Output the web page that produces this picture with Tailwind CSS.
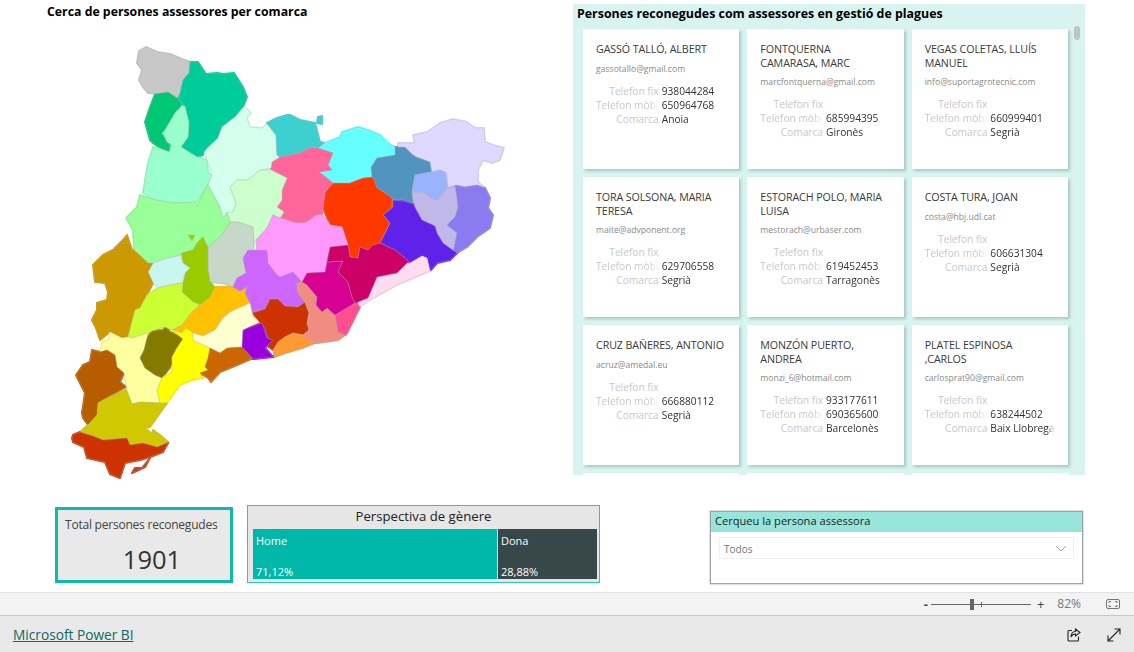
<!DOCTYPE html>
<html lang="en">
<head>
    <meta charset="UTF-8">
    <title>Microsoft Power BI</title>
    <script src="https://cdn.jsdelivr.net/npm/@tailwindcss/browser@4"></script>
</head>
<body class="h-[652px] w-[1134px] overflow-hidden bg-white font-['Open_Sans',sans-serif] flex flex-col">

    <!-- Report page -->
    <main class="h-[592px] flex flex-col">
        <div class="h-[505px] flex">
            <!-- Map -->
            <section class="w-[573px] pl-[47px] pt-[3px]">
                <h2 class="text-[12.3px] leading-[17px] font-bold text-black">Cerca de persones assessores per comarca</h2>
                <svg class="w-[480px] h-[450px] mt-[21px] ml-[23px]" viewBox="70 41 480 450" stroke-linejoin="round">
                    <g id="underlay" stroke-width="2"></g>
                    <g id="comarques" stroke="#b0b0b0" stroke-width="0.4">
                    <polygon fill="#c8c8c8" points="139,51 146,47 157,52 170,54 182,59 190,62 189,73 183,80 180,93 177,98 168,92 160,94 148,93 143,87 139,80 142,70 137,63"/>
                    <polygon fill="#00c774" points="155,94 168,92 177,98 182,104 175,113 168,127 162,133 166,142 170,145 169,152 160,148 153,143 150,140 145,122 149,110"/>
                    <polygon fill="#00cc99" points="190,62 198,62 206,74 217,73 223,74 234,73 243,87 247,97 243,107 235,117 222,127 218,138 207,148 203,155 197,157 181,147 188,137 189,123 185,107 179,98 183,80 189,73"/>
                    <polygon fill="#99ffcc" points="185,106 189,123 188,137 181,147 197,157 207,160 208,173 212,175 207,186 197,202 175,203 155,200 143,193 145,180 148,163 153,147 170,152 172,145 163,133 175,113"/>
                    <polygon fill="#d4ffec" points="245,107 251,113 247,118 250,127 262,128 267,124 276,135 277,155 280,157 271,168 260,170 248,180 237,180 230,187 236,203 233,212 223,218 220,207 208,185 212,175 207,160 204,152 218,138 222,127 235,117"/>
                    <polygon fill="#3dd0d0" points="267,123 277,118 287,115 290,115 300,120 315,123 320,142 325,143 318,148 309,148 300,153 280,157 277,155 276,135"/>
                    <polygon fill="#3dd0d0" points="318,117 322,116 322,124 317,123"/>
                    <polygon fill="#66ffff" points="318,148 325,143 340,137 342,132 358,127 368,130 380,135 388,143 395,147 397,155 377,158 371,167 373,177 363,178 350,183 340,183 333,183 327,178 319,172 332,170 328,165 333,153"/>
                    <polygon fill="#e0d9ff" points="398,143 415,143 413,135 427,132 440,123 453,119 467,122 475,128 484,128 485,142 493,145 504,148 500,160 492,163 483,160 478,170 478,182 485,188 477,185 465,187 457,185 448,187 447,173 440,170 432,172 430,162 417,157 410,153 398,147"/>
                    <polygon fill="#5294c0" points="395,147 405,147 415,157 430,162 431,172 415,175 412,192 413,203 403,200 393,200 385,193 377,188 372,178 371,168 377,158 395,155"/>
                    <polygon fill="#99b3ff" points="415,175 432,172 440,170 445,172 447,187 438,200 432,199 423,192 412,192"/>
                    <polygon fill="#c0b8e8" points="412,193 423,192 432,199 438,200 448,187 457,187 458,207 455,217 447,225 457,233 455,242 453,253 443,243 437,233 435,226 422,220 415,207"/>
                    <polygon fill="#8a7cf0" points="455,185 465,187 477,185 485,188 490,198 488,208 493,215 490,228 477,237 467,247 457,253 453,253 457,233 447,225 455,217 458,207"/>
                    <polygon fill="#5f22ea" points="393,200 403,201 413,204 422,220 435,226 437,233 443,243 457,253 450,260 437,263 430,271 427,258 422,256 410,263 405,258 395,250 380,243 390,223 383,215 393,207"/>
                    <polygon fill="#ffdcef" points="422,256 427,258 430,271 397,285 370,300 360,307 358,302 368,298 377,277 397,273 407,263 410,263"/>
                    <polygon fill="#ff3800" points="333,183 350,183 363,178 373,177 377,188 385,193 392,198 392,207 383,215 390,223 380,243 373,245 368,250 360,247 358,258 350,257 348,245 342,227 330,225 323,208 325,192"/>
                    <polygon fill="#ff6699" points="280,157 300,153 309,148 318,148 333,153 328,165 332,170 319,172 327,178 333,183 325,192 323,208 322,215 317,215 305,223 295,223 287,220 280,218 284,212 277,207 282,200 282,190 287,178 271,170 272,162"/>
                    <polygon fill="#ccffcc" points="230,187 237,180 248,180 260,170 271,170 287,178 282,190 282,200 277,207 284,212 280,218 273,215 267,228 256,240 257,250 253,250 254,243 253,227 238,222 230,222 227,212 233,212 236,203"/>
                    <polygon fill="#ff99ff" points="273,215 280,218 287,220 295,223 305,223 317,215 322,215 330,225 342,227 348,245 330,247 327,260 325,272 307,273 302,282 293,272 280,277 277,275 268,263 267,250 257,250 256,240 267,228"/>
                    <polygon fill="#c8d8c8" points="230,222 238,222 253,227 254,243 253,250 248,250 243,258 246,273 237,278 233,287 222,283 210,282 208,270 208,247 220,237"/>
                    <polygon fill="#99ff99" points="140,195 155,200 175,203 195,202 197,207 207,186 208,185 220,207 223,218 227,212 230,222 220,237 208,247 203,237 197,243 193,250 182,253 180,255 167,258 153,263 148,263 134,250 133,230 126,218 137,207"/>
                    <polygon fill="#99cc00" points="182,253 193,250 197,243 203,237 205,243 208,247 208,270 210,282 215,288 210,297 202,305 193,302 182,292 185,273 190,268 183,263"/>
                    <polygon fill="#99cc00" points="188,235 195,235 192,241"/>
                    <polygon fill="#c8f5ee" points="153,263 167,258 175,257 180,255 183,263 190,268 185,273 182,283 170,285 158,288 153,283 148,272"/>
                    <polygon fill="#cc9900" points="113,250 123,240 127,235 132,250 134,250 148,263 153,263 148,272 153,283 147,295 140,308 135,310 128,337 122,338 110,332 100,340 96,328 92,320 97,310 97,303 107,300 108,292 105,283 95,282 93,265 103,255"/>
                    <polygon fill="#ccff33" points="147,295 158,288 170,285 182,283 182,292 193,302 200,305 192,312 182,325 173,330 163,327 148,333 132,338 128,337 135,310 140,308"/>
                    <polygon fill="#ffc000" points="173,330 182,325 192,312 200,305 210,297 215,287 233,287 240,291 247,287 245,293 250,303 230,312 223,318 215,330 203,336 193,333 186,328 182,333"/>
                    <polygon fill="#cc66ff" points="243,258 248,250 253,250 257,250 267,250 268,263 277,275 280,277 293,272 302,282 297,283 298,293 305,302 298,307 285,306 278,299 270,299 265,309 252,313 250,303 245,293 247,287 240,291 233,287 237,278 246,273"/>
                    <polygon fill="#cc3300" points="252,313 265,309 270,299 278,299 285,306 298,307 305,302 309,313 307,323 309,330 303,335 293,333 285,337 278,342 273,350 266,345 272,340 268,339 265,328 260,323"/>
                    <polygon fill="#ff9933" points="274,350 278,342 285,337 293,333 303,335 309,340 317,342 302,348 285,353 274,357"/>
                    <polygon fill="#f08c80" points="297,283 302,282 307,285 317,297 316,305 322,312 327,308 335,315 338,332 345,335 338,340 317,343 309,340 303,335 309,330 307,323 309,313 305,302 298,293"/>
                    <polygon fill="#ff4f8f" points="335,315 355,303 360,307 347,333 345,335 338,332"/>
                    <polygon fill="#d60093" points="327,262 343,261 338,272 348,282 352,297 355,303 335,315 327,308 322,312 316,305 317,297 307,285 302,282 307,273 325,272"/>
                    <polygon fill="#cc0066" points="330,247 348,245 350,257 358,258 360,247 368,250 373,245 380,243 395,250 405,258 410,263 407,263 397,273 377,277 368,298 358,302 355,303 352,297 348,282 338,272 343,261 327,262"/>
                    <polygon fill="#ffffa0" points="100,352 102,342 108,340 110,332 122,338 128,337 132,338 148,333 147,338 144,350 140,358 145,368 155,375 162,378 157,390 160,403 140,402 132,404 127,390 124,373 117,367 115,355 107,350"/>
                    <polygon fill="#857a00" points="152,331 163,330 166,327 170,332 178,335 183,339 177,348 172,357 172,365 162,378 155,375 145,368 140,358 144,350 147,338"/>
                    <polygon fill="#ffff00" points="173,330 182,333 186,328 193,333 193,340 210,348 208,358 205,367 208,370 200,373 203,378 192,380 180,385 167,403 160,403 157,390 162,378 172,372 172,365 172,357 177,348 183,339 178,335"/>
                    <polygon fill="#ffffd0" points="193,333 203,336 215,330 223,318 230,312 250,303 253,317 259,322 243,330 242,347 227,348 220,353 210,348 193,340"/>
                    <polygon fill="#cc6600" points="210,348 220,353 227,348 242,347 253,358 237,365 220,372 211,382 208,378 200,373 208,370 205,367 208,358"/>
                    <polygon fill="#9900dd" points="243,330 262,323 267,338 273,340 265,348 273,357 253,359 242,347"/>
                    <polygon fill="#b85c00" points="92,350 100,352 107,350 115,355 117,367 124,373 120,382 126,387 103,400 98,403 97,415 88,425 83,418 82,413 85,393 80,383 76,375 83,365 90,362"/>
                    <polygon fill="#d0c800" points="126,390 132,404 140,402 160,403 167,403 150,427 145,428 152,434 153,430 160,435 168,442 157,447 143,443 130,445 127,438 103,440 93,436 80,432 88,425 97,415 98,403 103,400"/>
                    <polygon fill="#cc3300" points="80,432 93,436 103,440 127,438 130,445 143,443 157,447 168,443 163,452 150,457 140,460 125,463 120,478 110,474 105,462 87,458 84,447 73,442 72,438 73,435"/>
                    <polygon fill="#cc3300" points="150,458 145,467 132,473 135,468 142,468"/>
                    </g>
                </svg>
            </section>

            <!-- Advisers list -->
            <section class="relative mt-[4px] h-[471px] w-[512px] bg-[#d9f4f0] overflow-hidden">
                <h2 class="pl-[4px] pt-[1px] text-[12.4px] leading-[17px] font-bold text-black">Persones reconegudes com assessores en gestió de plagues</h2>
                <div class="absolute right-[5px] top-[22px] w-[6px] h-[14px] rounded-[3px] bg-[#bcc6c6]"></div>
                <div id="cards" class="mt-[7px] ml-[10px] w-[485px] grid grid-cols-3 gap-x-[8px] gap-y-[8px] auto-rows-[140px]"></div>
            </section>
        </div>

        <!-- Bottom row: KPI, treemap, slicer -->
        <div class="flex items-start">
            <div class="mt-[2px] ml-[55px] w-[178px] h-[76px] border-[3px] border-[#0fb9ac] bg-[#e9e9e9]">
                <p class="pt-[6px] pl-[7px] text-[12px] leading-[17px] text-[#444] tracking-[-0.22px] whitespace-nowrap">Total persones reconegudes</p>
                <p class="mt-[10px] pl-[16px] text-center text-[25.500px] leading-[32px] text-[#333]">1901</p>
            </div>

            <div class="ml-[14px] w-[353px] h-[78px] border border-[#2cc5b8] bg-[#e6e6e6] flex flex-col">
                <p class="h-[23px] text-center text-[13.2px] leading-[21px] text-[#222]">Perspectiva de gènere</p>
                <div class="ml-[5px] mr-[2px] h-[50px] flex gap-[1px] text-[11px] leading-[15px] text-white">
                    <div class="w-[244px] bg-[#00b8aa] flex flex-col justify-between px-[3px] pt-[4px]"><span>Home</span><span>71,12%</span></div>
                    <div class="flex-1 bg-[#37474a] flex flex-col justify-between px-[3px] pt-[4px]"><span>Dona</span><span>28,88%</span></div>
                </div>
            </div>

            <div class="mt-[6px] ml-[110px] w-[373px] h-[73px] border border-[#a0a0a0] shadow-[0_0_0_0.5px_#c0c0c0]">
                <p class="h-[20px] bg-[#98e5dc] pl-[4px] text-[11.1px] leading-[18px] text-[#222]">Cerqueu la persona assessora</p>
                <div class="mx-[8px] mt-[5px] h-[22px] border border-[#f0f0f0] flex items-center justify-between pl-[4px] pr-[6px] text-[10px] text-[#777]">
                    <span class="pt-[2px]">Todos</span>
                    <svg width="12" height="7" viewBox="0 0 12 7" fill="none" stroke="#888" stroke-width="0.8"><path d="M1 1l5 5 5-5"/></svg>
                </div>
            </div>
        </div>
    </main>

    <!-- Zoom bar -->
    <div class="h-[24px] bg-[#f3f3f3] border-t border-t-[#e2e2e2] border-b border-b-[#c8c8c8] flex items-center justify-end text-[#666]">
        <span class="text-[13px] font-bold leading-none text-[#444]">-</span>
        <div class="relative ml-[3px] w-[100px] h-[1px] bg-[#666]">
            <div class="absolute left-[39px] top-[-5px] w-[4px] h-[11px] bg-[#666]"></div>
            <div class="absolute left-[50px] top-[-2px] w-[1px] h-[5px] bg-[#666]"></div>
        </div>
        <span class="ml-[6px] text-[13px] leading-none text-[#444]">+</span>
        <span class="ml-[13px] text-[12px] leading-none text-[#777]">82%</span>
        <svg class="ml-[25px] mr-[14px]" width="14" height="10" viewBox="0 0 14 10" fill="none" stroke="#555" stroke-width="0.8">
            <rect x="0.5" y="0.5" width="13" height="9" rx="1.5"/>
            <path d="M3 4V2.5h2M9 2.5h2V4M11 6v1.5H9M5 7.5H3V6"/>
        </svg>
    </div>

    <!-- Footer -->
    <footer class="flex-1 bg-[#e9e9e9] flex items-center justify-between pl-[13px] pr-[13px] pt-[2px]">
        <a href="#" class="pt-[1px] text-[13.7px] text-[#0b6a66] underline">Microsoft Power BI</a>
        <div class="flex items-center gap-[26px]">
            <svg width="14" height="14" viewBox="0 0 14 14" fill="none" stroke="#222" stroke-width="1.1">
                <path d="M5 2.5H2a1 1 0 0 0-1 1V12a1 1 0 0 0 1 1h8.500a1 1 0 0 0 1-1V8.500"/>
                <path d="M8.500 1l4.500 3.500-4.500 3.500V6C6.200 6 4.800 7 4 9c0-3 1.500-5.500 4.500-5.500z"/>
            </svg>
            <svg width="14" height="14" viewBox="0 0 14 14" fill="none" stroke="#222" stroke-width="1.1">
                <path d="M1 13L13 1M7.500 1H13v5.500M1 7.500V13h5.500"/>
            </svg>
        </div>
    </footer>

    <script>
        // Same-coloured copy under the map so no white slivers show between comarques
        const underlay = document.getElementById('underlay');
        document.querySelectorAll('#comarques polygon').forEach(p => {
            const copy = p.cloneNode();
            copy.setAttribute('stroke', p.getAttribute('fill'));
            underlay.appendChild(copy);
        });

        const people = [
            ['GASSÓ TALLÓ, ALBERT', 'gassotallo@gmail.com', '938044284', '650964768', 'Anoia'],
            ['FONTQUERNA CAMARASA, MARC', 'marcfontquerna@gmail.com', '', '685994395', 'Gironès'],
            ['VEGAS COLETAS, LLUÍS MANUEL', 'info@suportagrotecnic.com', '', '660999401', 'Segrià'],
            ['TORA SOLSONA, MARIA TERESA', 'maite@advponent.org', '', '629706558', 'Segrià'],
            ['ESTORACH POLO, MARIA LUISA', 'mestorach@urbaser.com', '', '619452453', 'Tarragonès'],
            ['COSTA TURA, JOAN', 'costa@hbj.udl.cat', '', '606631304', 'Segrià'],
            ['CRUZ BAÑERES, ANTONIO', 'acruz@amedal.eu', '', '666880112', 'Segrià'],
            ['MONZÓN PUERTO, ANDREA', 'monzi_6@hotmail.com', '933177611', '690365600', 'Barcelonès'],
            ['PLATEL ESPINOSA ,CARLOS', 'carlosprat90@gmail.com', '', '638244502', 'Baix Llobregat']
        ];

        const row = (label, value, labelFade) =>
            `<div class="flex gap-[3px]"><span class="w-[64px] text-right whitespace-nowrap overflow-hidden text-[#c8c8c8] ${labelFade}">${label}</span><span class="w-[66px] whitespace-nowrap overflow-hidden text-[#333] [mask-image:linear-gradient(to_right,#000_88%,transparent)]">${value}</span></div>`;

        document.getElementById('cards').innerHTML = people.map(p => `
            <article class="bg-white shadow-[2px_2px_3px_rgba(120,160,155,0.55)] px-[13px] pt-[14px]">
                <h3 class="text-[10.7px] leading-[13.5px] text-[#3a3a3a] tracking-[-0.1px]">${p[0]}</h3>
                <p class="mt-[6px] text-[8.6px] leading-[12px] text-[#8a8a8a]">${p[1]}</p>
                <div class="mt-[9px] text-[10.2px] leading-[14px]">
                    ${row('Telefon fix', p[2], '')}
                    ${row('Telefon mòbil', p[3], '[mask-image:linear-gradient(to_right,#000_85%,transparent)]')}
                    ${row('Comarca', p[4], '')}
                </div>
            </article>`).join('') + '<article class="bg-white"></article>'.repeat(3);
    </script>

</body>
</html>
